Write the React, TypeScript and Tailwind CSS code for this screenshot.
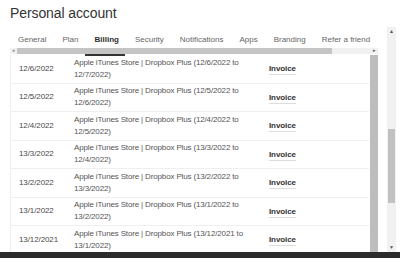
import React from "react"

const tabs = ["General", "Plan", "Billing", "Security", "Notifications", "Apps", "Branding", "Refer a friend"]

const rows = [
  ["12/6/2022", "12/7/2022"],
  ["12/5/2022", "12/6/2022"],
  ["12/4/2022", "12/5/2022"],
  ["13/3/2022", "12/4/2022"],
  ["13/2/2022", "13/3/2022"],
  ["13/1/2022", "13/2/2022"],
  ["13/12/2021", "13/1/2022"],
]

export default function App() {
  return (
    <div
      className="w-[400px] h-[258px] overflow-hidden bg-white flex flex-col"
      style={{ fontFamily: "'Liberation Sans', Arial, sans-serif" }}
    >
      <div className="flex flex-1 min-h-0">
        {/* page content */}
        <div className="w-[387px] flex flex-col pl-[10px] min-h-0">
          <h1 className="text-[14px] leading-[20px] tracking-[-0.1px] text-[#333] mt-[3px]">Personal account</h1>

          {/* tabs */}
          <div className="flex mt-[12px] text-[8px] leading-[10px] text-[#666]">
            {tabs.map((t) => (
              <div
                key={t}
                className={`px-2 whitespace-nowrap ${t === "Billing" ? "font-bold text-[#2e2e2e]" : ""}`}
              >
                {t}
              </div>
            ))}
          </div>

          {/* tab strip scrollbar */}
          <div className="flex items-center w-[368px] h-[6px] mt-[3px] bg-[#f1f1f1]">
            <div className="w-[7px] h-full flex items-center justify-center text-[5px] text-[#888]">◂</div>
            <div className="w-[315px] h-full bg-[#c4c4c4]" />
            <div className="flex-1" />
            <div className="w-[7px] h-full flex items-center justify-center text-[5px] text-[#555]">▸</div>
          </div>
          <div className="h-[2px] w-[40px] ml-[75px] -mb-[1px] bg-[#333] relative" />

          {/* billing table */}
          <div className="flex w-[368px] flex-1 min-h-0">
            <div className="flex-1 border-l border-[#eeeeee] overflow-hidden">
              {rows.map(([from, to]) => (
                <div key={from} className="flex items-center h-[28.5px] border-b border-[#efefef] shrink-0">
                  <div className="w-[63px] pl-2 text-[8px] tracking-[-0.1px] text-[#4a4a4a]">{from}</div>
                  <div className="w-[195px] text-[8px] leading-[12px] tracking-[-0.15px] text-[#555]">
                    Apple iTunes Store | Dropbox Plus ({from} to
                    <br />
                    {to})
                  </div>
                  <div className="mt-[2px] text-[8px] leading-[10px] font-bold tracking-[-0.1px] text-[#333] border-b border-[#dddddd]">
                    Invoice
                  </div>
                </div>
              ))}
            </div>
            <div className="w-[8px] bg-[#bdbdbd] ml-[1px]" />
          </div>
        </div>

        {/* outer scrollbar */}
        <div className="w-[9px] mt-[27px] flex flex-col bg-[#f1f1f1]">
          <div className="h-[10px] flex items-center justify-center text-[5px] text-[#555]">▲</div>
          <div className="h-[92px]" />
          <div className="h-[74px] mx-[1px] bg-[#c1c1c1]" />
          <div className="flex-1" />
          <div className="h-[8px] flex items-center justify-center text-[5px] text-[#555]">▼</div>
        </div>
      </div>

      {/* taskbar strip */}
      <div className="h-[6px] bg-[#2b2b2b] shrink-0" />
    </div>
  )
}
